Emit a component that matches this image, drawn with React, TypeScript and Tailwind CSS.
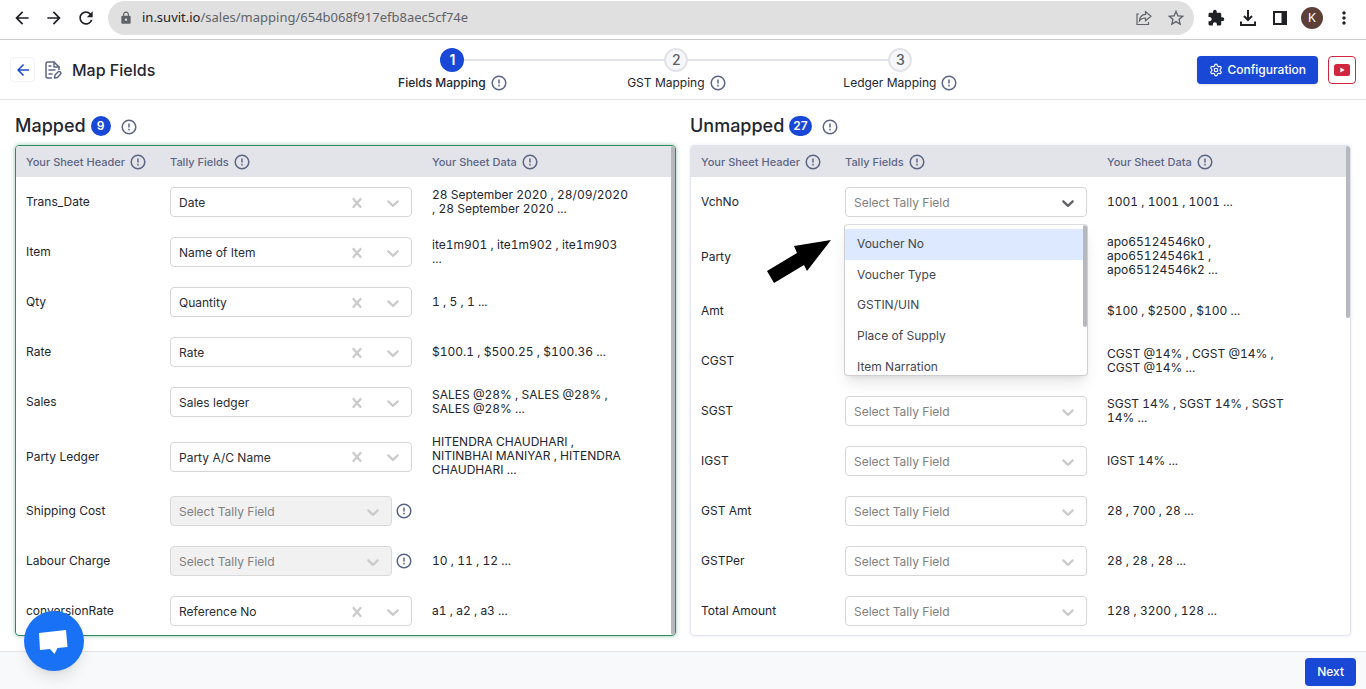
import { useState } from "react";
import {
  MdArrowBack,
  MdArrowForward,
  MdExtension,
  MdLock,
  MdMoreVert,
  MdRefresh,
  MdStarBorder,
} from "react-icons/md";
import { Settings } from "lucide-react";

type Row = {
  header: string;
  field?: string;
  data: string;
  disabled?: boolean;
  open?: boolean;
};

const mappedRows: Row[] = [
  {
    header: "Trans_Date",
    field: "Date",
    data: "28 September 2020 , 28/09/2020 , 28 September 2020 ...",
  },
  {
    header: "Item",
    field: "Name of Item",
    data: "ite1m901 , ite1m902 , ite1m903 ...",
  },
  { header: "Qty", field: "Quantity", data: "1 , 5 , 1 ..." },
  { header: "Rate", field: "Rate", data: "$100.1 , $500.25 , $100.36 ..." },
  {
    header: "Sales",
    field: "Sales ledger",
    data: "SALES @28% , SALES @28% , SALES @28% ...",
  },
  {
    header: "Party Ledger",
    field: "Party A/C Name",
    data: "HITENDRA CHAUDHARI , NITINBHAI MANIYAR , HITENDRA CHAUDHARI ...",
  },
  { header: "Shipping Cost", data: "", disabled: true },
  { header: "Labour Charge", data: "10 , 11 , 12 ...", disabled: true },
  { header: "conversionRate", field: "Reference No", data: "a1 , a2 , a3 ..." },
];

const unmappedRows: Row[] = [
  { header: "VchNo", data: "1001 , 1001 , 1001 ...", open: true },
  {
    header: "Party",
    data: "apo65124546k0 , apo65124546k1 , apo65124546k2 ...",
  },
  { header: "Amt", data: "$100 , $2500 , $100 ..." },
  { header: "CGST", data: "CGST @14% , CGST @14% , CGST @14% ..." },
  { header: "SGST", data: "SGST 14% , SGST 14% , SGST 14% ..." },
  { header: "IGST", data: "IGST 14% ..." },
  { header: "GST Amt", data: "28 , 700 , 28 ..." },
  { header: "GSTPer", data: "28 , 28 , 28 ..." },
  { header: "Total Amount", data: "128 , 3200 , 128 ..." },
];

const tallyFields = [
  "Voucher No",
  "Voucher Type",
  "GSTIN/UIN",
  "Place of Supply",
  "Item Narration",
];

const steps = ["Fields Mapping", "GST Mapping", "Ledger Mapping"];

const InfoIcon = () => (
  <svg
    viewBox="0 0 16 16"
    className="w-4 h-4 shrink-0 text-[#5d6585]"
    fill="none"
    stroke="currentColor"
    strokeWidth="1.5"
  >
    <circle cx="8" cy="8" r="6.8" />
    <path d="M8 4.6v3.9M8 9.8v1.6" />
  </svg>
);

const Chevron = () => (
  <svg viewBox="0 0 20 20" className="w-5 h-5" fill="currentColor">
    <path d="M4.516 7.548c0.436-0.446 1.043-0.481 1.576 0l3.908 3.747 3.908-3.747c0.533-0.481 1.141-0.446 1.574 0 0.436 0.445 0.408 1.197 0 1.615-0.406 0.418-4.695 4.502-4.695 4.502-0.217 0.223-0.502 0.335-0.787 0.335s-0.57-0.112-0.789-0.335c0 0-4.287-4.084-4.695-4.502s-0.436-1.17 0-1.615z" />
  </svg>
);

const Cross = () => (
  <svg viewBox="0 0 20 20" className="w-5 h-5" fill="currentColor">
    <path d="M14.348 14.849c-0.469 0.469-1.229 0.469-1.697 0l-2.651-3.030-2.651 3.029c-0.469 0.469-1.229 0.469-1.697 0-0.469-0.469-0.469-1.229 0-1.697l2.758-3.15-2.759-3.152c-0.469-0.469-0.469-1.228 0-1.697s1.228-0.469 1.697 0l2.652 3.031 2.651-3.031c0.469-0.469 1.228-0.469 1.697 0s0.469 1.229 0 1.697l-2.758 3.152 2.758 3.15c0.469 0.469 0.469 1.229 0 1.698z" />
  </svg>
);

const BrowserBar = () => (
  <div className="flex items-center h-10 shrink-0 border-b border-[#c9cbcd] bg-white pb-1 pl-3 pr-3 text-[#202124]">
    <div className="flex items-center gap-3">
      <button aria-label="Back">
        <MdArrowBack className="w-5 h-5" />
      </button>
      <button aria-label="Forward">
        <MdArrowForward className="w-5 h-5" />
      </button>
      <button aria-label="Reload">
        <MdRefresh className="w-5 h-5" />
      </button>
    </div>
    <div className="flex items-center flex-1 h-[34px] mx-3 pl-2.5 pr-2 rounded-full bg-[#e0e0e0]">
      <MdLock className="w-4 h-4 p-px text-[#5f6368]" />
      <p className="flex-1 pl-2 font-['Noto_Sans',sans-serif] text-[13px] text-[#5f6368]">
        <span className="text-[#202124]">in.suvit.io</span>
        /sales/mapping/654b068f917efb8aec5cf74e
      </p>
      <div className="flex items-center gap-3 text-[#5f6368]">
        <button aria-label="Share">
          <svg
            viewBox="0 0 20 20"
            className="w-5 h-5"
            fill="none"
            stroke="currentColor"
            strokeWidth="1.2"
          >
            <path d="M5 6H3v10.500h11.500v-2.500" />
            <path d="M11.500 3.700 17 8.200l-5.500 4.500V10c-3 0-4.700.8-6 2.700.3-3.500 2.500-6 6-6.300z" />
          </svg>
        </button>
        <button aria-label="Bookmark">
          <MdStarBorder className="w-5 h-5" />
        </button>
      </div>
    </div>
    <div className="flex items-center gap-3">
      <button aria-label="Extensions">
        <MdExtension className="w-5 h-5 p-px" />
      </button>
      <button aria-label="Downloads">
        <svg
          viewBox="0 0 20 20"
          className="w-5 h-5"
          fill="none"
          stroke="currentColor"
          strokeWidth="2"
        >
          <path d="M10 2v9.500M6 8l4 4 4-4M3 13.500V17h14v-3.500" />
        </svg>
      </button>
      <button aria-label="Side panel">
        <svg viewBox="0 0 20 20" className="w-5 h-5" fill="currentColor">
          <path d="M3 3h14v14H3zM5 5v10h6.500V5z" fillRule="evenodd" />
        </svg>
      </button>
      <button
        aria-label="Profile"
        className="w-5 h-5 rounded-full bg-[#5d4037] ring-1 ring-[#5d4037] text-white text-xs"
      >
        K
      </button>
      <button aria-label="Menu">
        <MdMoreVert className="w-5 h-5" />
      </button>
    </div>
  </div>
);

const Stepper = () => (
  <ol className="flex pt-0.5">
    {steps.map((step, i) => (
      <li key={step} className="w-56 flex flex-col items-center">
        <div className="w-full flex items-center">
          <span
            className={i === 0 ? "flex-1 h-0.5" : "flex-1 h-0.5 bg-[#e3e4ea]"}
          />
          <span
            className={
              i === 0
                ? "w-6 h-6 rounded-full flex items-center justify-center text-sm font-semibold bg-[#1a48d6] text-white"
                : "w-6 h-6 rounded-full flex items-center justify-center text-sm font-medium bg-[#f6f7f8] border-2 border-[#e3e4e8] text-[#5b6068]"
            }
          >
            {i + 1}
          </span>
          <span
            className={
              i === steps.length - 1
                ? "flex-1 h-0.5"
                : "flex-1 h-0.5 bg-[#e3e4ea]"
            }
          />
        </div>
        <div
          className={
            i === 0
              ? "flex items-center gap-[5px] text-xs leading-[22px] font-medium"
              : "flex items-center gap-[5px] text-xs leading-[22px]"
          }
        >
          {step}
          <InfoIcon />
        </div>
      </li>
    ))}
  </ol>
);

const TopBar = () => (
  <header className="flex items-center justify-between h-[60px] shrink-0 px-2.5 bg-white border-b border-[#e3e4e8]">
    <div className="flex items-center">
      <button
        aria-label="Go back"
        className="w-[25px] h-[25px] flex items-center justify-center rounded border border-[#f1f1f4] text-[#1a48d6]"
      >
        <MdArrowBack className="w-[18px] h-[18px]" />
      </button>
      <svg
        viewBox="0 0 20 20"
        className="w-5 h-5 ml-2"
        fill="none"
        stroke="#5d6585"
        strokeWidth="1.5"
        strokeLinecap="round"
        strokeLinejoin="round"
      >
        <path d="M8.500 18H4.500C3.400 18 3 17.400 3 16.500v-13C3 2.500 3.600 2 4.500 2h6.500l5 5v2.500" />
        <path d="M11 2v5h5M6 6h2M6 10h6M6 14h3" />
        <path d="m11.500 18 .5-3 3.200-3.200c1.200-1.100 3.600 1 2.400 2.300L14.500 17.400z" />
      </svg>
      <h1 className="ml-[9px] text-base font-medium">Map Fields</h1>
    </div>
    <Stepper />
    <div className="flex items-center gap-2.5">
      <button className="flex items-center gap-1 h-7 px-3 rounded bg-[#1a48d6] text-white text-xs font-medium shadow-sm">
        <Settings className="w-3.5 h-3.5" />
        Configuration
      </button>
      <button
        aria-label="Watch on YouTube"
        className="w-7 h-7 flex items-center justify-center rounded border border-[#d22640]"
      >
        <svg viewBox="0 0 16 12" className="w-4 h-3">
          <rect width="16" height="12" rx="2.500" fill="#d22640" />
          <path d="M6.300 3.500v5l4.400-2.500z" fill="#fff" />
        </svg>
      </button>
    </div>
  </header>
);

const FieldMenu = () => (
  <div className="absolute z-10 top-[37px] -left-px w-[244px] h-[152px] overflow-hidden rounded border border-[#cfcfd3] border-t-[#dddde0] bg-white shadow-lg">
    <ul
      role="listbox"
      aria-label="Tally fields"
      className="grid grid-rows-5 h-[157px] pt-1 text-[#44474f]"
    >
      {tallyFields.map((name, i) => (
        <li
          key={name}
          role="option"
          aria-selected={i === 0}
          className={
            i === 0
              ? "flex items-center px-3 bg-[#dce9fe]"
              : "flex items-center px-3"
          }
        >
          {name}
        </li>
      ))}
    </ul>
    <span className="absolute top-0 right-0 w-1 h-[102px] rounded-full bg-[#b7b7be]" />
  </div>
);

// black pointer towards the first option
const Pointer = () => (
  <svg
    viewBox="0 0 64 43"
    className="absolute top-[53px] -left-[78px] w-16 h-[43px]"
  >
    <path d="M64 0 40 31l-3-6L7 43 0 31l30-18-3-7z" />
  </svg>
);

const TallySelect = ({ row }: { row: Row }) => {
  const [value, setValue] = useState(row.field ?? "");

  return (
    <div className="relative flex items-center gap-1">
      <div
        className={
          row.disabled
            ? "flex flex-1 items-center h-[30px] pr-2 rounded border border-[#d9d9d9] bg-[#f1f1f1] text-[#cbcbcb]"
            : "flex flex-1 items-center h-[30px] pr-2 rounded border border-[#d5d5d8] bg-white text-[#cbcbcb]"
        }
      >
        <select
          aria-label={`Tally field for ${row.header}`}
          disabled={row.disabled}
          value={value}
          onChange={(e) => setValue(e.target.value)}
          className={
            value
              ? "flex-1 min-w-0 h-full pt-0.5 pl-2 appearance-none outline-none text-[#2a2d34]"
              : "flex-1 min-w-0 h-full pt-0.5 pl-2 appearance-none outline-none opacity-100 text-[#808080]"
          }
        >
          <option value="">Select Tally Field</option>
          {row.field && <option value={row.field}>{row.field}</option>}
          {tallyFields.map((name) => (
            <option key={name} value={name}>
              {name}
            </option>
          ))}
        </select>
        {value && (
          <button
            aria-label="Clear"
            className="mr-4 pt-px"
            onClick={() => setValue("")}
          >
            <Cross />
          </button>
        )}
        <span className={row.open ? "pt-px text-[#606166]" : "pt-px"}>
          <Chevron />
        </span>
      </div>
      {row.disabled && <InfoIcon />}
      {row.open && (
        <>
          <FieldMenu />
          <Pointer />
        </>
      )}
    </div>
  );
};

const FieldsTable = ({ rows }: { rows: Row[] }) => (
  <table className="w-full table-fixed text-left text-xs leading-[14px]">
    <colgroup>
      <col className="w-36" />
      <col className="w-[262px]" />
      <col />
    </colgroup>
    <thead>
      <tr className="h-[31px] bg-[#e3e4ea] text-[11px] text-[#5d6585]">
        {["Your Sheet Header", "Tally Fields", "Your Sheet Data"].map((t) => (
          <th key={t} className="px-2.5 font-medium">
            <div className="flex items-center gap-[5px]">
              {t}
              <InfoIcon />
            </div>
          </th>
        ))}
      </tr>
    </thead>
    <tbody>
      {rows.map((row) => (
        <tr key={row.header} className="h-[50px]">
          <td className="pl-2.5">{row.header}</td>
          <td className="px-2.5">
            <TallySelect row={row} />
          </td>
          <td className="px-2.5 pt-2 pb-[9px]">
            <p className="max-w-[197px] tabular-nums">{row.data}</p>
          </td>
        </tr>
      ))}
    </tbody>
  </table>
);

const PanelTitle = ({ title, count }: { title: string; count: number }) => (
  <div className="flex items-center pt-4 pb-[9px]">
    <h2 className="text-lg leading-5 font-medium">{title}</h2>
    <span className="ml-[5px] h-5 min-w-5 px-1 flex items-center justify-center rounded-full bg-[#1a48d6] text-white text-xs font-semibold">
      {count}
    </span>
    <span className="ml-2.5 pt-0.5">
      <InfoIcon />
    </span>
  </div>
);

export default function App() {
  return (
    <div className="h-screen flex flex-col bg-white font-['Inter',sans-serif] text-[#23262f]">
      <BrowserBar />
      <TopBar />

      <main className="flex-1 min-h-0 grid grid-cols-2 gap-3.5 px-[15px] pb-[15px]">
        <section className="flex flex-col min-h-0">
          <PanelTitle title="Mapped" count={9} />
          <div className="relative flex-1 min-h-0 overflow-hidden rounded border border-[#2f8a5e] shadow-[0_0_4px_#2f8a5e80]">
            <FieldsTable rows={mappedRows} />
            <span className="absolute top-0 bottom-0 right-0 w-1 rounded-full bg-[#b7b7be]" />
          </div>
        </section>

        <section className="flex flex-col min-h-0">
          <PanelTitle title="Unmapped" count={27} />
          <div className="relative flex-1 min-h-0 overflow-hidden rounded border border-[#e3e4ee] shadow-[0_0_3px_#e3e4f4]">
            <FieldsTable rows={unmappedRows} />
            <span className="absolute top-0 right-0 w-1 h-[172px] rounded-full bg-[#b7b7be]" />
          </div>
        </section>
      </main>

      <footer className="flex justify-end shrink-0 pt-1.5 pb-[3px] px-2.5 border-t border-[#e3e4e8] bg-[#f8f9fb]">
        <button className="h-7 px-3 rounded bg-[#1a48d6] text-white text-xs font-medium">
          Next
        </button>
      </footer>

      {/* Chat launcher */}
      <button
        aria-label="Open chat"
        className="fixed z-20 left-6 bottom-[18px] w-[60px] h-[60px] rounded-full bg-[#1972f5] shadow-lg"
      >
        <svg viewBox="0 0 60 60" className="w-full h-full" fill="#fff">
          <path d="m15 22 27-3 1.500 17-10 1-3 6-4.500-5-10 1z" />
        </svg>
      </button>
    </div>
  );
}
